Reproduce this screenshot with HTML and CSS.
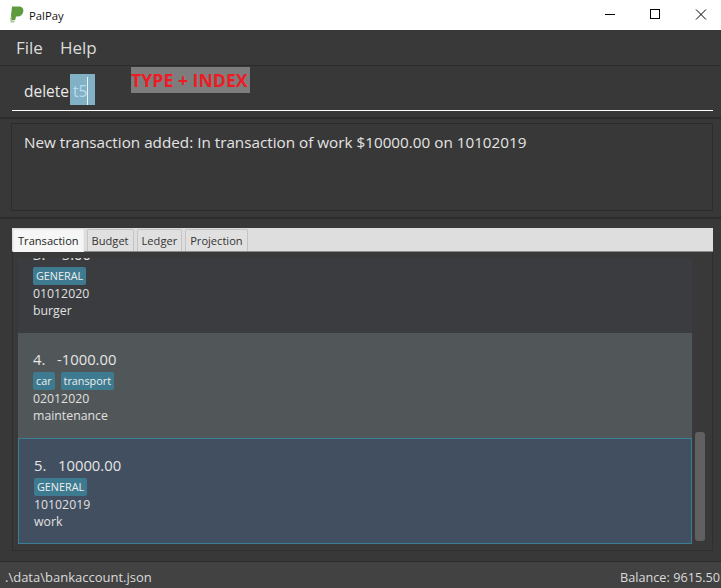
FILE: index.html
```html
<!DOCTYPE html>
<html lang="en">
<head>
<meta charset="utf-8">
<title>PalPay</title>
<link rel="stylesheet" href="styles.css">
</head>
<body>
<div class="app">
  <header class="titlebar">
    <svg class="logo" width="14" height="17" viewBox="0 0 14 17"><path d="M2 0.500h6.500C12 0.500 13.800 2.500 13.300 5.500C12.800 8.500 10.500 10.500 7.500 10.500H6L5.200 14H1.500C0.800 14 0.500 13.500 0.600 13L2 0.500Z" fill="#5f9a3e"/><path d="M1.200 9L0.500 15C0.400 16 0.900 16.500 1.600 16.500H4.200L4.800 14.500H2Z" fill="#a8c795"/></svg>
    <span class="app-name">PalPay</span>
    <div class="winctl">
      <svg width="12" height="12" viewBox="0 0 12 12"><path d="M1 5.500H11" stroke="#000" stroke-width="1"/></svg>
      <svg width="12" height="12" viewBox="0 0 12 12"><rect x="1.500" y="0.500" width="9" height="9" fill="none" stroke="#000"/></svg>
      <svg class="win-close" width="12" height="12" viewBox="0 0 12 12"><path d="M1 0.500L11 10.500M11 0.500L1 10.500" stroke="#000" stroke-width="1"/></svg>
    </div>
  </header>
  <nav class="menubar"><span>File</span><span>Help</span></nav>
  <section class="command">
    <div class="command-input"><span>delete</span><span class="selected">t5<i class="caret"></i></span></div>
    <div class="note">TYPE + INDEX</div>
  </section>
  <section class="result-pane">
    <div class="result">New transaction added: In transaction of work $10000.00 on 10102019</div>
  </section>
  <section class="list-pane">
    <div class="tabs">
      <span class="tab active">Transaction</span><span class="tab">Budget</span><span class="tab">Ledger</span><span class="tab">Projection</span>
    </div>
    <div class="list-wrap">
      <div class="list">
        <article class="card card-clip">
          <h3 class="amount"><span class="idx">3.</span>-5.00</h3>
          <div class="tags"><span class="tag">GENERAL</span></div>
          <p>01012020</p><p>burger</p>
        </article>
        <article class="card card-alt">
          <h3 class="amount"><span class="idx">4.</span>-1000.00</h3>
          <div class="tags"><span class="tag">car</span><span class="tag">transport</span></div>
          <p>02012020</p><p>maintenance</p>
        </article>
        <article class="card card-selected">
          <h3 class="amount"><span class="idx">5.</span>10000.00</h3>
          <div class="tags"><span class="tag">GENERAL</span></div>
          <p>10102019</p><p>work</p>
        </article>
      </div>
      <div class="scrollbar"><div class="thumb"></div></div>
    </div>
  </section>
  <footer class="status"><span class="path">.\data\bankaccount.json</span><span class="balance">Balance: 9615.50</span></footer>
</div>
</body>
</html>
```
FILE: styles.css
```css
* { box-sizing: border-box; }
html, body { margin: 0; padding: 0; }
body { font-family: "Open Sans", "Noto Sans", sans-serif; background: #383838; }
.app { width: 721px; height: 588px; display: flex; flex-direction: column; overflow: hidden; position: relative; }
.titlebar { height: 30px; background: #fff; display: flex; align-items: center; padding-left: 10px; color: #111; flex: none; }
.logo { margin-right: 5px; margin-top: -2px; }
.app-name { font-size: 11.300px; }
.winctl { margin-left: auto; display: flex; gap: 33px; padding-right: 14px; }
.win-close { margin-left: 1px; }
.menubar { height: 36px; background: #393939; border-bottom: 1px solid #2c2c2c; display: flex; gap: 17px; padding: 7px 0 0 16px; color: #dcdcdc; font-size: 17px; line-height: 22px; flex: none; }
.command { height: 53px; background: #383838; border-bottom: 2px solid #2c2c2c; padding: 0 8px 0 12px; position: relative; flex: none; }
.command-input { height: 45px; border-bottom: 1px solid #fff; display: flex; align-items: flex-start; padding: 14px 0 0 12px; color: #e8e8e8; font-size: 15.500px; line-height: 22px; }
.selected { background: #82b0c4; color: #b6dcee; width: 25px; height: 31px; margin-left: 1px; margin-top: -6px; padding: 6px 0 0 3px; position: relative; }
.caret { position: absolute; left: 17px; top: 3px; width: 1px; height: 28px; background: #e8f4fa; }
.note { position: absolute; left: 131px; top: 1px; width: 119px; height: 26px; background: #7d7d7d; color: #ed1c24; font-weight: 700; font-size: 17.700px; line-height: 26px; white-space: nowrap; overflow: hidden; }
.result-pane { height: 100px; padding: 4px 8px 0 11px; border-bottom: 2px solid #2c2c2c; flex: none; }
.result { height: 88px; border: 1px solid #2c2c2c; background: #383838; padding: 7px 12px; color: #e4e4e4; font-size: 15.250px; line-height: 22px; }
.list-pane { flex: 1; display: flex; flex-direction: column; padding: 9px 8px 10px 12px; min-height: 0; }
.tabs { height: 24px; background: #dedede; display: flex; padding: 1px 0 0 1px; gap: 3px; flex: none; border-bottom: 1px solid #8a8a8a; }
.tab { height: 22px; padding: 0 4px; font-size: 11.100px; line-height: 22px; color: #333; background: #e0e0e0; border: 1px solid #c4c4c4; border-bottom: none; border-radius: 2px 2px 0 0; }
.tab.active { background: #f6f6f6; color: #222; border-color: #ececec; height: 23px; }
.list-wrap { flex: 1; display: flex; background: #393939; border: 1px solid #2f2f2f; border-top: none; min-height: 0; padding: 0 0 6px 5px; }
.list { width: 674px; display: flex; flex-direction: column; overflow: hidden; }
.card { flex: none; color: #e0e0e0; font-size: 12.300px; padding: 0 15px; }
.card p { margin: 0; height: 17px; line-height: 17px; }
.amount { margin: 0; font-size: 14.800px; font-weight: 500; color: #e6e6e6; line-height: 20px; }
.idx { display: inline-block; width: 24px; }
.tags { display: flex; gap: 6px; margin: 3px 0 0; height: 18px; }
.tag { background: #3e7b91; color: #eee; font-size: 10.800px; line-height: 18px; height: 18px; padding: 0 3px; border-radius: 2px; }
.card-clip { height: 75px; background: #3a3c3f; margin-top: 6px; overflow: hidden; }
.card-clip .amount { margin-top: -14px; }
.card-alt { height: 105px; background: #515658; padding-top: 16px; }
.card-selected { height: 106px; background: #424f60; border: 1px solid #3a7f96; padding-top: 16px; }
.scrollbar { flex: 1; position: relative; }
.thumb { position: absolute; right: 7px; bottom: 3px; width: 10px; height: 109px; background: #606060; border-radius: 3px; }
.status { height: 27px; flex: none; background: #424242; border-top: 1px solid #2c2c2c; display: flex; justify-content: space-between; padding: 5px 1px 0 5px; color: #dadada; line-height: 20px; }
.path { font-size: 13px; }
.balance { font-size: 12.700px; }
```
